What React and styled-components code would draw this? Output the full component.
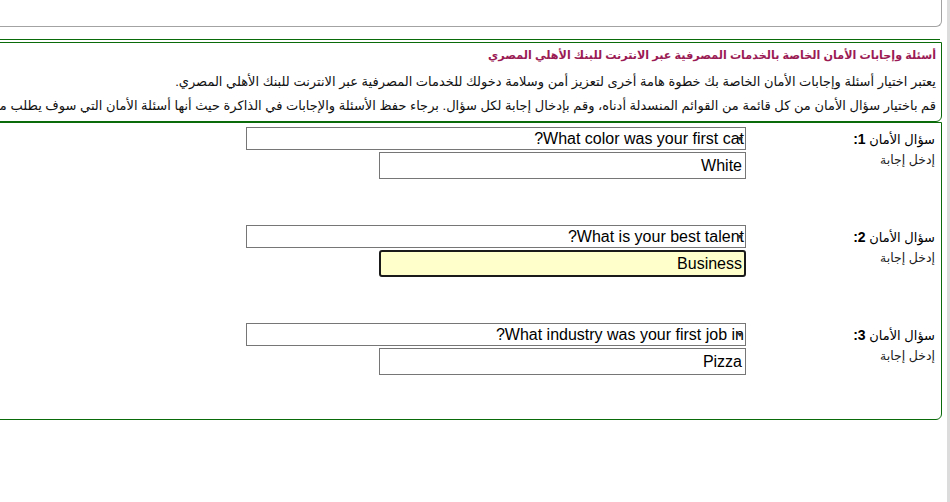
import React from "react";
import styled, { createGlobalStyle } from "styled-components";

const GlobalStyle = createGlobalStyle`
	html, body {
		margin: 0;
		padding: 0;
		background: #fff;
	}
	body {
		font-family: "Liberation Sans", "DejaVu Sans", Arial, sans-serif;
		color: #000;
		overflow: hidden;
	}
`;

const Page = styled.div`
	width: 950px;
	height: 502px;
	box-sizing: border-box;
	padding-right: 5px;
	border-right: 3px solid #dcdcdc;
	overflow: hidden;
`;

const Frame = styled.div`
	width: 1200px;
`;

const TopBox = styled.div`
	height: 26px;
	border: 1px solid #a3a3a3;
	border-top: none;
	border-bottom-right-radius: 6px;
`;

const Rule = styled.div`
	margin-top: 12px;
	height: 0;
	border-top: 1px solid #0a6b0a;
	margin-right: 2px;
`;

const InfoBox = styled.div`
	margin-top: 2px;
	border: 1px solid #0a6b0a;
	border-bottom-right-radius: 6px;
	padding: 0 5px 3px 0;
	white-space: nowrap;
`;

const Title = styled.div`
	line-height: 24px;
	font-size: 11.2px;
	font-weight: bold;
	color: #9b1b55;
`;

const Line = styled.div`
	line-height: 24px;
	font-size: 13px;
	margin-top: ${(p) => (p.$gap ? "3px" : "0")};
	color: #111;
`;

const FormBox = styled.div`
	border: 1px solid #0a6b0a;
	border-bottom-right-radius: 6px;
	padding: 4px 0 44px;
	display: flex;
	flex-direction: column;
	gap: 46px;
`;

const Question = styled.div`
	display: grid;
	grid-template-columns: 195px 500px;
	grid-template-rows: 23px 27px;
	row-gap: 2px;
	justify-content: start;
`;

const Label = styled.div`
	padding-right: 6px;
	font-size: 13px;
	align-self: center;
	color: #000;

	b {
		font-size: 14px;
	}
`;

const Hint = styled.div`
	padding-right: 6px;
	font-size: 12.5px;
	line-height: 14px;
	padding-top: 1px;
	color: #222;
`;

const SelectBox = styled.div`
	position: relative;
	box-sizing: border-box;
	height: 23px;
	border: 1px solid #767676;
	font-size: 16px;
	line-height: 21px;
	padding-right: 1px;
	overflow: hidden;
	white-space: nowrap;
	background: #fff;
`;

const Arrow = styled.svg`
	position: absolute;
	right: 2px;
	top: 9px;
`;

const Answer = styled.div`
	box-sizing: border-box;
	width: 367px;
	height: 27px;
	border: ${(p) => (p.$focused ? "2px solid #1a1a1a" : "1px solid #767676")};
	border-radius: ${(p) => (p.$focused ? "3px" : "0")};
	background: ${(p) => (p.$focused ? "#ffffcc" : "#fff")};
	font-size: 16px;
	line-height: ${(p) => (p.$focused ? "23px" : "25px")};
	padding-right: ${(p) => (p.$focused ? "2px" : "3px")};
	white-space: nowrap;
`;

const questions = [
	{ n: 1, q: "What color was your first cat?", a: "White" },
	{ n: 2, q: "What is your best talent?", a: "Business", focused: true },
	{ n: 3, q: "What industry was your first job in?", a: "Pizza" },
];

const Select = ({ value }) => (
	<SelectBox>
		{value}
		<Arrow width="6" height="4" viewBox="0 0 6 4">
			<path d="M0 0 L6 0 L3 4 Z" fill="#333" />
		</Arrow>
	</SelectBox>
);

export default function App() {
	return (
		<Page dir="rtl">
			<GlobalStyle />
			<Frame>
				<TopBox />
				<Rule />
				<InfoBox>
					<Title>أسئلة وإجابات الأمان الخاصة بالخدمات المصرفية عبر الانترنت للبنك الأهلي المصري</Title>
					<Line $gap>
						يعتبر اختيار أسئلة وإجابات الأمان الخاصة بك خطوة هامة أخرى لتعزيز أمن وسلامة دخولك للخدمات المصرفية عبر الانترنت للبنك الأهلي المصري.
					</Line>
					<Line>
						قم باختيار سؤال الأمان من كل قائمة من القوائم المنسدلة أدناه، وقم بإدخال إجابة لكل سؤال. برجاء حفظ الأسئلة والإجابات في الذاكرة حيث أنها أسئلة الأمان التي سوف يطلب منك الإجابة عليها.
					</Line>
				</InfoBox>
				<FormBox>
					{questions.map((item) => (
						<Question key={item.n}>
							<Label>
								سؤال الأمان <b>{item.n}:</b>
							</Label>
							<Select value={item.q} />
							<Hint>إدخل إجابة</Hint>
							<Answer $focused={item.focused}>{item.a}</Answer>
						</Question>
					))}
				</FormBox>
			</Frame>
		</Page>
	);
}
